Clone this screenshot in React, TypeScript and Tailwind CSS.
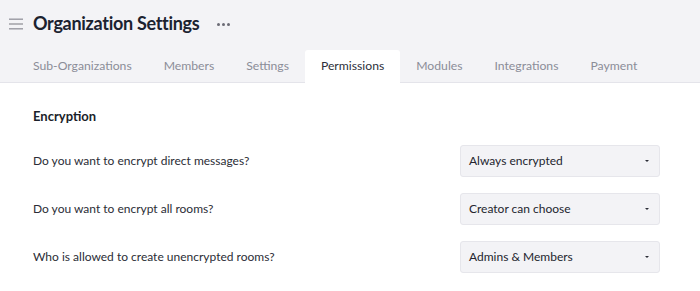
import React from "react";

const tabs = ["Sub-Organizations", "Members", "Settings", "Permissions", "Modules", "Integrations", "Payment"];

const rows = [
  { q: "Do you want to encrypt direct messages?", v: "Always encrypted" },
  { q: "Do you want to encrypt all rooms?", v: "Creator can choose" },
  { q: "Who is allowed to create unencrypted rooms?", v: "Admins & Members" },
];

export default function App() {
  return (
    <div className="w-[700px] h-[291px] bg-white overflow-hidden" style={{ fontFamily: "Lato, 'Open Sans', sans-serif" }}>
      <div className="bg-[#f3f3f6] border-b border-[#e4e4ea]">
        <div className="flex items-center h-[46px] pl-[9px]">
          <svg width="14" height="12" viewBox="0 0 14 12" className="mr-[10px] mt-[1px]">
            <rect x="0" y="0.5" width="14" height="1.4" fill="#9a9aa2" />
            <rect x="0" y="5.3" width="14" height="1.4" fill="#9a9aa2" />
            <rect x="0" y="10.1" width="14" height="1.4" fill="#9a9aa2" />
          </svg>
          <h1 className="text-[18px] font-bold text-[#1b2230] tracking-[-0.3px]">Organization Settings</h1>
          <div className="flex gap-[2px] ml-[18px] mt-[2px]">
            <span className="w-[3px] h-[3px] rounded-full bg-[#6b6b75]" />
            <span className="w-[3px] h-[3px] rounded-full bg-[#6b6b75]" />
            <span className="w-[3px] h-[3px] rounded-full bg-[#6b6b75]" />
          </div>
        </div>
        <div className="flex items-end h-[37px] pl-[17px] -mb-px">
          {tabs.map((t) => (
            <div
              key={t}
              className={
                t === "Permissions"
                  ? "h-[33px] px-[16px] flex items-center bg-white rounded-t-[3px] text-[12.2px] text-[#2d2f3a]"
                  : "h-[33px] px-[16px] flex items-center text-[12.2px] text-[#8b8d98]"
              }
            >
              {t}
            </div>
          ))}
        </div>
      </div>
      <div className="pl-[33px] pr-[40px]">
        <div className="h-[66px] flex items-center pt-[1px] text-[13px] font-bold text-[#1b1f2a]">Encryption</div>
        <div className="flex flex-col gap-[16px] -mt-[4px]">
          {rows.map((r) => (
            <div key={r.q} className="flex items-center justify-between h-[32px]">
              <span className="text-[12px] text-[#2b2d36]">{r.q}</span>
              <div className="w-[200px] h-[32px] bg-[#f3f3f6] border border-[#e6e6eb] rounded-[3px] flex items-center justify-between pl-[8px] pr-[10px]">
                <span className="text-[12px] text-[#23252e]">{r.v}</span>
                <svg width="4" height="2" viewBox="0 0 4 2">
                  <path d="M0 0 H4 L2 2 Z" fill="#2b2d36" />
                </svg>
              </div>
            </div>
          ))}
        </div>
      </div>
    </div>
  );
}
